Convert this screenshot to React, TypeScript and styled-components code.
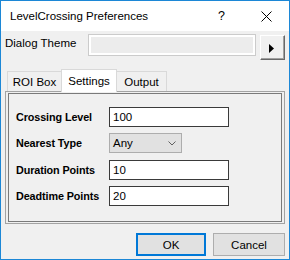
import React from "react";
import styled, {createGlobalStyle} from "styled-components";

const GlobalStyle = createGlobalStyle`
    body {
        margin: 0;
        font-family: "Liberation Sans", Arial, sans-serif;
        font-size: 11.5px;
        color: #000;
    }
`;

//============ WINDOW FRAME ====================
const Window = styled.div`
    width: 290px;
    height: 260px;
    box-sizing: border-box;
    border: 1px solid #1c87d6;
    display: flex;
    flex-direction: column;
    background: #f0f0f0;
`;

const TitleBar = styled.div`
    height: 30px;
    flex-shrink: 0;
    background: #fff;
    display: flex;
    align-items: center;
    padding-left: 9px;
`;

const TitleText = styled.div`
    flex-grow: 1;
    font-size: 11.5px;
`;

const CaptionButton = styled.div`
    width: 45px;
    height: 30px;
    display: flex;
    align-items: center;
    justify-content: center;
    font-size: 12.5px;
`;

const Body = styled.div`
    flex-grow: 1;
    display: flex;
    flex-direction: column;
`;

//============ THEME ROW ====================
const ThemeRow = styled.div`
    display: flex;
    align-items: flex-start;
    height: 27px;
    margin-top: 3px;
    padding-left: 4px;
`;

const ThemeLabel = styled.div`
    width: 83px;
    line-height: 14px;
    padding-top: 2px;
`;

const ThemeField = styled.div`
    width: 168px;
    height: 22px;
    box-sizing: border-box;
    border: 1px solid #cbcbcb;
    box-shadow: inset 0 0 0 2px #fff;
    background: #ececec;
`;

const ArrowButton = styled.div`
    width: 25px;
    height: 25px;
    margin: 1px 0 0 4px;
    box-sizing: border-box;
    border-top: 1px solid #fff;
    border-left: 1px solid #fff;
    border-right: 1px solid #696969;
    border-bottom: 1px solid #696969;
    box-shadow: inset -1px -1px 0 #a0a0a0;
    background: #f0f0f0;
    display: flex;
    align-items: center;
    justify-content: center;
    padding: 2px 2px 0 0;
`;

//============ TABS ====================
const TabArea = styled.div`
    margin-top: 8px;
    padding: 0 4px;
`;

const TabStrip = styled.div`
    display: flex;
    align-items: flex-end;
    height: 22px;
    padding-left: 2px;
`;

const Tab = styled.div<{ $active?: boolean; $width: number; $edge?: "left" | "right" }>`
    width: ${p => p.$width}px;
    height: ${p => (p.$active ? 23 : 20)}px;
    margin-bottom: ${p => (p.$active ? -1 : 0)}px;
    position: relative;
    z-index: ${p => (p.$active ? 1 : 0)};
    box-sizing: border-box;
    background: ${p => (p.$active ? "#fff" : "#f0f0f0")};
    border-top: 1px solid #d9d9d9;
    border-left: ${p => (p.$edge === "right" ? "none" : "1px solid #d9d9d9")};
    border-right: ${p => (p.$edge === "left" ? "none" : "1px solid #d9d9d9")};
    display: flex;
    align-items: center;
    justify-content: center;
    font-size: 11.5px;
    padding-bottom: ${p => (p.$active ? 1 : 0)}px;
`;

const TabPage = styled.div`
    height: 133px;
    box-sizing: border-box;
    border: 1px solid #a3a3a3;
    padding: 1px 2px;
`;

const InnerFrame = styled.div`
    height: 100%;
    box-sizing: border-box;
    border: 1px solid #7a7a7a;
    padding: 13px 0 0 7px;
`;

//============ FORM ====================
const FieldRow = styled.div<{ $top?: number }>`
    display: flex;
    align-items: center;
    height: 20px;
    margin-top: ${p => p.$top || 0}px;
`;

const FieldLabel = styled.div`
    width: 93px;
    font-weight: bold;
    font-size: 10.8px;
    letter-spacing: -0.1px;
`;

const TextBox = styled.div`
    width: 120px;
    height: 20px;
    box-sizing: border-box;
    border: 1px solid #3a3a3a;
    background: #fff;
    padding-left: 3px;
    display: flex;
    align-items: center;
`;

const ComboBox = styled.div`
    width: 73px;
    height: 20px;
    box-sizing: border-box;
    border: 1px solid #adadad;
    background: #e1e1e1;
    padding: 0 5px 0 3px;
    display: flex;
    align-items: center;
    justify-content: space-between;
`;

//============ BUTTONS ====================
const ButtonRow = styled.div`
    display: flex;
    justify-content: flex-end;
    gap: 7px;
    margin-top: 9px;
    padding-right: 4px;
`;

const PushButton = styled.div<{ $default?: boolean; $width: number }>`
    width: ${p => p.$width}px;
    height: 23px;
    box-sizing: border-box;
    border: ${p => (p.$default ? "2px solid #0078d7" : "1px solid #adadad")};
    background: #e1e1e1;
    display: flex;
    align-items: center;
    justify-content: center;
    font-size: 11.5px;
`;

const fields = [
    {label: "Duration Points", value: "10", top: 7},
    {label: "Deadtime Points", value: "20", top: 6},
];

//============== COMPONENT =================
const App: React.FC = () => {
    return (
        <>
            <GlobalStyle/>
            <Window>
                <TitleBar>
                    <TitleText>LevelCrossing Preferences</TitleText>
                    <CaptionButton>?</CaptionButton>
                    <CaptionButton>
                        <svg width="11" height="11" viewBox="0 0 11 11">
                            <path d="M0.5 0.5 L10.5 10.5 M10.5 0.5 L0.5 10.5" stroke="#000" strokeWidth="1" fill="none"/>
                        </svg>
                    </CaptionButton>
                </TitleBar>
                <Body>
                    <ThemeRow>
                        <ThemeLabel>Dialog Theme</ThemeLabel>
                        <ThemeField/>
                        <ArrowButton>
                            <svg width="5" height="9" viewBox="0 0 5 9">
                                <polygon points="0,0 5,4.5 0,9" fill="#000"/>
                            </svg>
                        </ArrowButton>
                    </ThemeRow>
                    <TabArea>
                        <TabStrip>
                            <Tab $width={54} $edge="left">ROI Box</Tab>
                            <Tab $width={56} $active>Settings</Tab>
                            <Tab $width={50} $edge="right">Output</Tab>
                        </TabStrip>
                        <TabPage>
                            <InnerFrame>
                                <FieldRow>
                                    <FieldLabel>Crossing Level</FieldLabel>
                                    <TextBox>100</TextBox>
                                </FieldRow>
                                <FieldRow $top={6}>
                                    <FieldLabel>Nearest Type</FieldLabel>
                                    <ComboBox>
                                        <span>Any</span>
                                        <svg width="8" height="5" viewBox="0 0 8 5">
                                            <path d="M0.5 0.5 L4 4 L7.5 0.5" stroke="#606060" strokeWidth="1" fill="none"/>
                                        </svg>
                                    </ComboBox>
                                </FieldRow>
                                {fields.map(f => (
                                    <FieldRow key={f.label} $top={f.top}>
                                        <FieldLabel>{f.label}</FieldLabel>
                                        <TextBox>{f.value}</TextBox>
                                    </FieldRow>
                                ))}
                            </InnerFrame>
                        </TabPage>
                    </TabArea>
                    <ButtonRow>
                        <PushButton $width={70} $default>OK</PushButton>
                        <PushButton $width={72}>Cancel</PushButton>
                    </ButtonRow>
                </Body>
            </Window>
        </>
    );
};

export default App;
